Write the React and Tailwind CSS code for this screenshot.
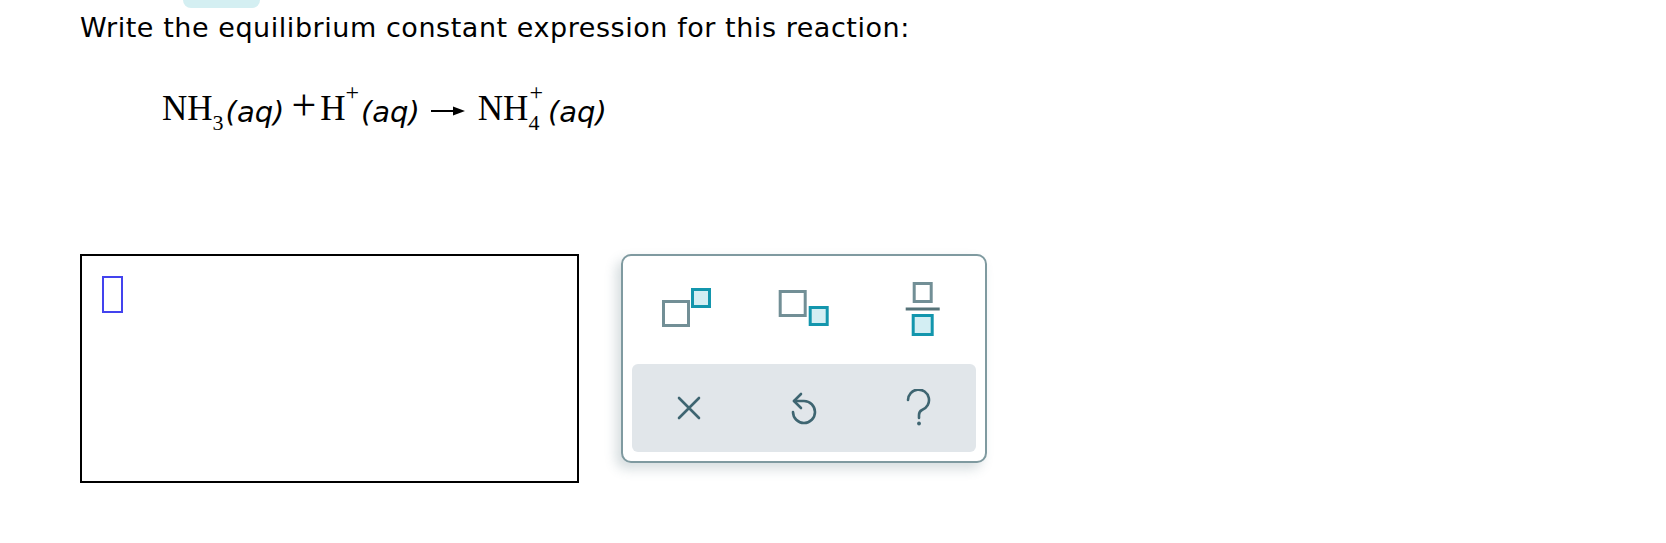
import React from "react";

function SupIcon() {
  return (
    <svg width="54" height="44" viewBox="0 0 54 44" fill="none">
      <rect x="1.5" y="13.5" width="25" height="24" stroke="#728f96" strokeWidth="3" fill="#ffffff" />
      <rect x="30.5" y="1.5" width="17" height="17" stroke="#1396ad" strokeWidth="3" fill="#d3eef3" />
    </svg>
  );
}

function SubIcon() {
  return (
    <svg width="54" height="44" viewBox="0 0 54 44" fill="none">
      <rect x="3.2" y="3.5" width="25" height="24" stroke="#728f96" strokeWidth="3" fill="#ffffff" />
      <rect x="33.2" y="19.5" width="17" height="17" stroke="#1396ad" strokeWidth="3" fill="#d3eef3" />
    </svg>
  );
}

function FracIcon() {
  return (
    <svg width="44" height="56" viewBox="0 0 44 56" fill="none">
      <rect x="17.2" y="1.5" width="17" height="18" stroke="#728f96" strokeWidth="3" fill="#ffffff" />
      <rect x="8.7" y="25.5" width="34" height="3" fill="#567379" />
      <rect x="16.2" y="33.5" width="19" height="19" stroke="#1396ad" strokeWidth="3" fill="#d3eef3" />
    </svg>
  );
}

function XIcon() {
  return (
    <svg width="24" height="24" viewBox="0 0 24 24" fill="none">
      <path d="M2 2 L22 22 M22 2 L2 22" stroke="#3e6571" strokeWidth="2.6" strokeLinecap="round" />
    </svg>
  );
}

function UndoIcon() {
  return (
    <svg width="30" height="34" viewBox="0 0 30 34" fill="none">
      <path d="M12 3 L5 10 L12 17" stroke="#3e6571" strokeWidth="2.6" strokeLinecap="round" strokeLinejoin="round" />
      <path d="M5 10 H15 A11 11 0 1 1 4 21" stroke="#3e6571" strokeWidth="2.6" strokeLinecap="round" />
    </svg>
  );
}

function QIcon() {
  return (
    <svg width="28" height="38" viewBox="0 0 28 38" fill="none">
      <path d="M3 11 A10.5 10.5 0 1 1 17 21 C15 22 14 23.5 14 26 V29" stroke="#3e6571" strokeWidth="2.6" strokeLinecap="round" />
      <circle cx="14" cy="34.5" r="1.9" fill="#3e6571" />
    </svg>
  );
}

function Arrow() {
  return (
    <svg width="34" height="10" viewBox="0 0 34 10" className="inline-block align-[4px] ml-[11px]">
      <rect x="0" y="4" width="24" height="2" fill="#000" />
      <polygon points="22,0.5 34,5 22,9.5" fill="#000" />
    </svg>
  );
}

export default function App() {
  return (
    <div className="w-[1666px] h-[543px] bg-white pl-[80px] font-['DejaVu_Sans',sans-serif] text-black overflow-hidden">
      <div className="ml-[103px] w-[77px] h-[8px] rounded-b-[10px] bg-[#d4eff2]" />
      <p className="mt-[4px] text-[27px] leading-[32px] tracking-[0.55px]">
        Write the equilibrium constant expression for this reaction:
      </p>

      <div className="mt-[36px] ml-[82px] h-[40px] text-[35px] leading-[40px] whitespace-nowrap font-['Liberation_Serif',serif]">
        <span>NH</span>
        <span className="text-[22px] leading-none align-[-10px]">3</span>
        <span className="font-['DejaVu_Sans',sans-serif] italic text-[29px] leading-none ml-[2px] align-[-2px]">(aq)</span>
        <span className="text-[44px] leading-none ml-[7px] mr-[4px]">+</span>
        <span>H</span>
        <span className="text-[24px] leading-none align-[20px]">+</span>
        <span className="font-['DejaVu_Sans',sans-serif] italic text-[29px] leading-none ml-[2px] align-[-2px]">(aq)</span>
        <Arrow />
        <span className="ml-[13px]">NH</span>
        <span className="text-[22px] leading-none align-[-10px]">4</span>
        <span className="text-[24px] leading-none align-[20px] ml-[-10px]">+</span>
        <span className="font-['DejaVu_Sans',sans-serif] italic text-[29px] leading-none ml-[5px] align-[-2px]">(aq)</span>
      </div>

      <div className="mt-[134px] flex items-start gap-[42px]">
        <div className="w-[499px] h-[229px] border-2 border-black pl-[20px] pt-[20px]">
          <div className="w-[21px] h-[37px] border-2 border-[#4343ee]" />
        </div>

        <div className="w-[366px] h-[209px] border-2 border-[#7f9aa0] rounded-[10px] bg-white px-[9px] pb-[9px] flex flex-col shadow-[-5px_6px_12px_rgba(70,100,110,0.22)]">
          <div className="h-[108px] grid grid-cols-3 items-center justify-items-center">
            <SupIcon />
            <SubIcon />
            <FracIcon />
          </div>
          <div className="h-[88px] rounded-[6px] bg-[#e1e6ea] grid grid-cols-3 items-center justify-items-center">
            <XIcon />
            <UndoIcon />
            <QIcon />
          </div>
        </div>
      </div>
    </div>
  );
}
